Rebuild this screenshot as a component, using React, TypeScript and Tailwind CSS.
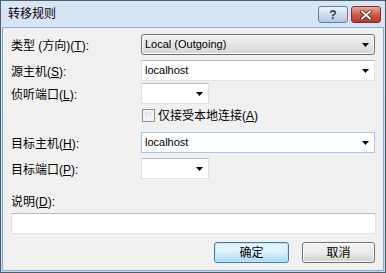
const FONT = "font-['Liberation_Sans','Noto_Sans_CJK_SC',sans-serif]";

function Arrow() {
  return (
    <svg width="7" height="4" viewBox="0 0 7 4" className="shrink-0">
      <path d="M0 0 H7 L3.5 4 Z" fill="#000" />
    </svg>
  );
}

function Label({ text, hot }: { text: string; hot: string }) {
  return (
    <span className="text-[12px] leading-none text-black whitespace-nowrap">
      {text}(<u className="underline-offset-1">{hot}</u>):
    </span>
  );
}

function Combo({
  value,
  wide,
  active,
}: {
  value?: string;
  wide?: boolean;
  active?: boolean;
}) {
  return (
    <div
      className={`flex h-[21px] items-center justify-between border bg-white pl-[3px] pr-[5px] ${
        wide ? "w-[234px]" : "w-[68px]"
      } ${
        active
          ? "border-[#a7c8ea]"
          : "border-[#dee3ea] border-t-[#b8bcc4]"
      }`}
    >
      <span className="text-[11px] leading-none text-black">{value}</span>
      <Arrow />
    </div>
  );
}

function Row({ label, hot, mt, children }: { label: string; hot: string; mt: string; children: React.ReactNode }) {
  return (
    <div className={`flex h-[21px] items-center ${mt}`}>
      <div className="w-[138px] pl-[8px]">
        <Label text={label} hot={hot} />
      </div>
      {children}
    </div>
  );
}

export default function App() {
  return (
    <div className={`${FONT} h-[273px] w-[386px] bg-white`}>
      <div className="flex h-[273px] w-[386px] flex-col border border-[#4f5d6d] bg-gradient-to-b from-[#d8e5f5] to-[#c3d6ee]">
        {/* title bar */}
        <div className="flex h-[26px] items-center justify-between pl-[7px] pr-[4px]">
          <span className="text-[12px] text-black">转移规则</span>
          <div className="flex gap-[3px] pt-[1px]">
            <div className="flex h-[17px] w-[30px] items-center justify-center rounded-[3px] border border-[#6c7e96] bg-gradient-to-b from-[#eef3f9] via-[#cfdced] to-[#b3c7e0] text-[12px] font-bold leading-none text-[#2b3a4e]">
              ?
            </div>
            <div className="flex h-[17px] w-[30px] items-center justify-center rounded-[3px] border border-[#7d2f24] bg-gradient-to-b from-[#eaa99c] via-[#d0594a] to-[#b8392a]">
              <svg width="12" height="10" viewBox="0 0 12 10">
                <path d="M2 1.5 L10 8.5 M10 1.5 L2 8.5" stroke="#4a1b14" strokeWidth="3.6" strokeLinecap="square" />
                <path d="M2 1.5 L10 8.5 M10 1.5 L2 8.5" stroke="#fff" strokeWidth="2" strokeLinecap="square" />
              </svg>
            </div>
          </div>
        </div>

        {/* client area */}
        <div className="mx-[1px] mb-[1px] flex flex-1 flex-col border border-[#7fb1e0] bg-[#f0f0f0] pr-[7px]">
          <Row label="类型 (方向)" hot="T" mt="mt-[6px]">
            <div className="flex h-[21px] w-[234px] items-center justify-between rounded-[3px] border border-[#707070] bg-gradient-to-b from-[#f2f2f2] via-[#e6e6e6] to-[#d4d4d4] pl-[3px] pr-[5px] shadow-[inset_0_0_0_1px_#fcfcfc]">
              <span className="text-[11px] leading-none text-black">Local (Outgoing)</span>
              <Arrow />
            </div>
          </Row>
          <Row label="源主机" hot="S" mt="mt-[5px]">
            <Combo value="localhost" wide />
          </Row>
          <Row label="侦听端口" hot="L" mt="mt-[2px]">
            <Combo />
          </Row>
          <div className="mt-[5px] flex h-[13px] items-center pl-[139px]">
            <div className="h-[13px] w-[13px] border border-[#8e8f8f] bg-gradient-to-br from-[#dcdcdc] to-[#fbfbfb] shadow-[inset_0_0_0_2px_#f4f4f4]" />
            <span className="ml-[3px] text-[12px] leading-none text-black">
              仅接受本地连接(<u>A</u>)
            </span>
          </div>
          <Row label="目标主机" hot="H" mt="mt-[10px]">
            <Combo value="localhost" wide active />
          </Row>
          <Row label="目标端口" hot="P" mt="mt-[5px]">
            <Combo />
          </Row>
          <div className="mt-[16px] flex h-[14px] items-center pl-[8px]">
            <Label text="说明" hot="D" />
          </div>
          <div className="ml-[8px] mt-[4px] h-[21px] border border-[#dee3ea] border-t-[#b8bcc4] bg-white" />
          <div className="mt-[8px] flex justify-end gap-[13px] pr-[1px]">
            <div className="flex h-[21px] w-[75px] items-center justify-center rounded-[3px] border border-[#3c7fb1] bg-gradient-to-b from-[#eaf6fd] via-[#d9f0fc] to-[#a7d9f5] shadow-[inset_0_0_0_1px_#bfe4f8] text-[12px] leading-none text-black">
              确定
            </div>
            <div className="flex h-[21px] w-[73px] items-center justify-center rounded-[3px] border border-[#707070] bg-gradient-to-b from-[#f2f2f2] via-[#ebebeb] to-[#cfcfcf] shadow-[inset_0_0_0_1px_#fcfcfc] text-[12px] leading-none text-black">
              取消
            </div>
          </div>
        </div>
      </div>
    </div>
  );
}
